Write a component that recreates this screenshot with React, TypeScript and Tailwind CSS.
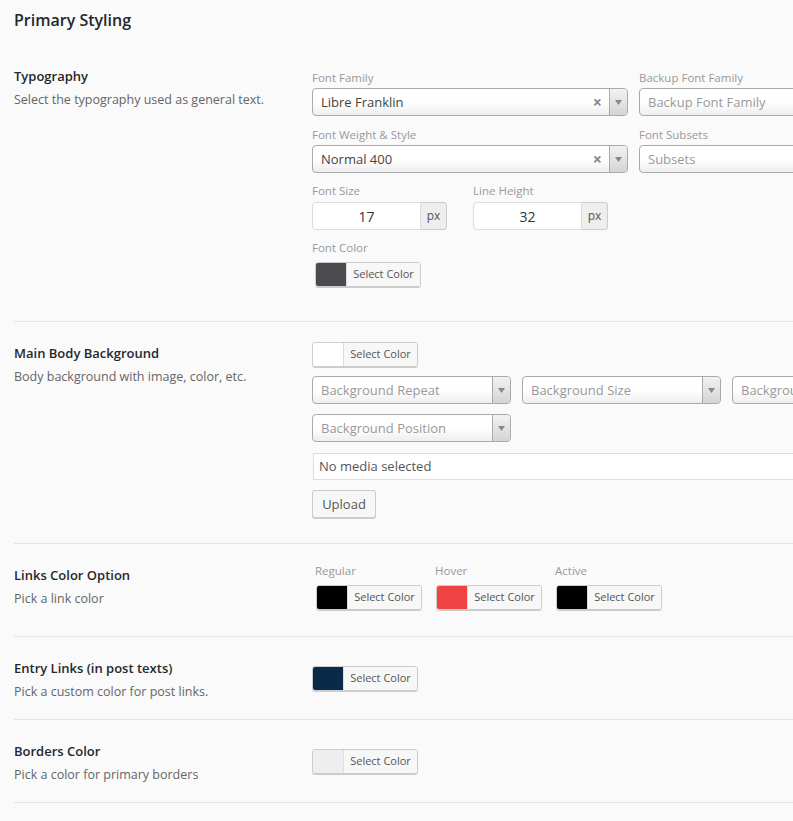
import type { ReactNode } from 'react'

const font = { fontFamily: '"Open Sans", "Noto Sans", Arial, sans-serif' }

function FieldLabel({ children, className = '' }: { children: ReactNode; className?: string }) {
  return <div className={`text-[11.5px] leading-[16px] text-[#999] ${className}`}>{children}</div>
}

function Arrow() {
  return (
    <div className="flex w-[18px] shrink-0 items-center justify-center border-l border-[#aaa] bg-gradient-to-b from-[#f2f2f2] to-[#d4d4d4] rounded-r-[4px]">
      <svg width="7" height="5" viewBox="0 0 7 5">
        <path d="M0 0h7L3.5 5z" fill="#888" />
      </svg>
    </div>
  )
}

function Select({
  value,
  placeholder,
  width,
  clearable = false,
  arrow = true,
}: {
  value?: string
  placeholder?: string
  width: string
  clearable?: boolean
  arrow?: boolean
}) {
  return (
    <div
      className={`flex h-[28px] shrink-0 rounded-[4px] border border-[#aaa] bg-gradient-to-b from-white from-50% to-[#eee] ${width}`}
    >
      <div className="flex flex-1 items-center pl-[8px] pr-[7px] pt-[2px] text-[13px] overflow-hidden whitespace-nowrap">
        <span className={value ? 'text-[#444]' : 'text-[#999]'}>{value ?? placeholder}</span>
        {clearable && (
          <span className="ml-auto -mt-[2px] text-[16px] font-bold leading-none text-[#888]">×</span>
        )}
      </div>
      {arrow && <Arrow />}
    </div>
  )
}

function ColorButton({ color, className = '' }: { color: string; className?: string }) {
  return (
    <div
      className={`flex h-[25px] w-[106px] overflow-hidden rounded-[3px] border border-[#ccc] shadow-[0_1px_0_#ccc] ${className}`}
    >
      <div className="w-[30px] shrink-0" style={{ backgroundColor: color }} />
      <div className="flex flex-1 items-center justify-center border-l border-[#ddd] bg-[#f7f7f7] text-[11px] text-[#555]">
        Select Color
      </div>
    </div>
  )
}

function PxInput({ value }: { value: string }) {
  return (
    <div className="flex h-[28px]">
      <div className="flex w-[109px] items-center justify-center rounded-l-[4px] border border-[#ddd] bg-white text-[14px] text-[#333]">
        {value}
      </div>
      <div className="flex w-[26px] items-center justify-center rounded-r-[4px] border border-l-0 border-[#ccc] bg-[#eee] text-[12px] text-[#555]">
        px
      </div>
    </div>
  )
}

function Row({
  title,
  desc,
  left = 'pt-[21px]',
  children,
  body,
}: {
  title: string
  desc: string
  left?: string
  children: ReactNode
  body: string
}) {
  return (
    <div className="flex border-b border-[#e5e5e5]">
      <div className={`w-[298px] shrink-0 ${left}`}>
        <div className="text-[13px] font-semibold leading-[20px] text-[#23282d]">{title}</div>
        <div className="mt-[4px] text-[12.5px] leading-[20px] text-[#666]">{desc}</div>
      </div>
      <div className={`min-w-0 flex-1 ${body}`}>{children}</div>
    </div>
  )
}

export default function App() {
  return (
    <div className="min-h-[821px] w-[793px] overflow-hidden bg-[#fafafa] pl-[14px]" style={font}>
      <h2 className="h-[45px] pt-[8px] text-[16px] font-semibold leading-[24px] text-[#23282d]">
        Primary Styling
      </h2>

      {/* Typography */}
      <div className="flex border-b border-[#e5e5e5]">
        <div className="w-[298px] shrink-0 pt-[21px]">
          <div className="text-[13px] font-semibold leading-[20px] text-[#23282d]">Typography</div>
          <div className="mt-[4px] text-[12.5px] leading-[20px] text-[#666]">
            Select the typography used as general text.
          </div>
        </div>
        <div className="min-w-0 flex-1 pt-[25px] pb-[34px]">
          <div className="flex gap-[11px]">
            <div>
              <FieldLabel className="mb-[2px]">Font Family</FieldLabel>
              <Select value="Libre Franklin" width="w-[316px]" clearable />
            </div>
            <div>
              <FieldLabel className="mb-[2px]">Backup Font Family</FieldLabel>
              <Select placeholder="Backup Font Family" width="w-[200px]" arrow={false} />
            </div>
          </div>
          <div className="mt-[11px] flex gap-[11px]">
            <div>
              <FieldLabel className="mb-[2px]">Font Weight &amp; Style</FieldLabel>
              <Select value="Normal 400" width="w-[316px]" clearable />
            </div>
            <div>
              <FieldLabel className="mb-[2px]">Font Subsets</FieldLabel>
              <Select placeholder="Subsets" width="w-[200px]" arrow={false} />
            </div>
          </div>
          <div className="mt-[10px] flex gap-[26px]">
            <div>
              <FieldLabel className="mb-[3px]">Font Size</FieldLabel>
              <PxInput value="17" />
            </div>
            <div>
              <FieldLabel className="mb-[3px]">Line Height</FieldLabel>
              <PxInput value="32" />
            </div>
          </div>
          <FieldLabel className="mt-[10px]">Font Color</FieldLabel>
          <ColorButton color="#4a4a4f" className="ml-[3px] mt-[6px]" />
        </div>
      </div>

      <Row title="Main Body Background" desc="Body background with image, color, etc." body="pt-[20px] pb-[25px]">
        <ColorButton color="#ffffff" />
        <div className="mt-[9px] flex gap-[11px]">
          <Select placeholder="Background Repeat" width="w-[199px]" />
          <Select placeholder="Background Size" width="w-[199px]" />
          <Select placeholder="Background Attachment" width="w-[199px]" />
        </div>
        <div className="mt-[10px]">
          <Select placeholder="Background Position" width="w-[199px]" />
        </div>
        <div className="ml-[1px] mt-[11px] flex h-[27px] w-[520px] items-center border border-[#ddd] bg-white pl-[5px] pt-[1px] text-[13px] text-[#555]">
          No media selected
        </div>
        <button className="mt-[10px] h-[28px] w-[64px] rounded-[3px] border border-[#ccc] bg-[#f7f7f7] pt-[1px] text-[13px] text-[#555] shadow-[0_1px_0_#ccc]">
          Upload
        </button>
      </Row>

      <Row title="Links Color Option" desc="Pick a link color" body="pt-[19px] pb-[26px]">
        <div className="flex gap-[14px] pl-[4px]">
          {[
            ['Regular', '#000000'],
            ['Hover', '#f04444'],
            ['Active', '#000000'],
          ].map(([label, color]) => (
            <div key={label}>
              <FieldLabel className="-ml-[1px]">{label}</FieldLabel>
              <ColorButton color={color} className="mt-[6px]" />
            </div>
          ))}
        </div>
      </Row>

      <Row title="Entry Links (in post texts)" desc="Pick a custom color for post links." body="pt-[29px] pb-[28px]">
        <ColorButton color="#0a2a47" />
      </Row>

      <Row title="Borders Color" desc="Pick a color for primary borders" body="pt-[29px] pb-[28px]">
        <ColorButton color="#eeeeee" />
      </Row>
    </div>
  )
}
